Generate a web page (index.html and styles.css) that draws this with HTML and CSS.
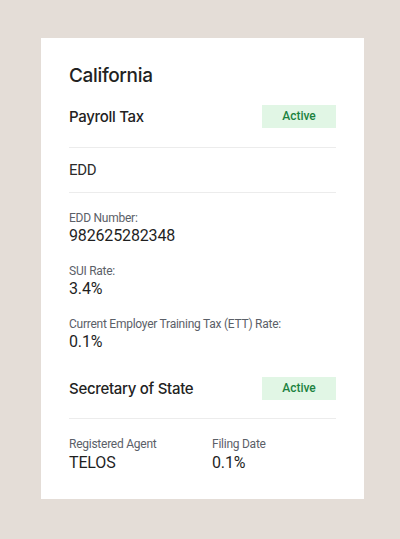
FILE: index.html
```html
<!DOCTYPE html>
<html>
<head>
<meta charset="utf-8">
<link rel="stylesheet" href="styles.css">
</head>
<body>
<div class="card">
  <h1 class="title">California</h1>
  <div class="section-head">
    <span class="section-name">Payroll Tax</span>
    <span class="badge">Active</span>
  </div>
  <div class="agency">EDD</div>
  <div class="fields">
    <div class="field">
      <div class="label">EDD Number:</div>
      <div class="value">982625282348</div>
    </div>
    <div class="field">
      <div class="label">SUI Rate:</div>
      <div class="value">3.4%</div>
    </div>
    <div class="field">
      <div class="label">Current Employer Training Tax (ETT) Rate:</div>
      <div class="value">0.1%</div>
    </div>
  </div>
  <div class="section-head second">
    <span class="section-name">Secretary of State</span>
    <span class="badge">Active</span>
  </div>
  <div class="grid">
    <div class="field">
      <div class="label">Registered Agent</div>
      <div class="value">TELOS</div>
    </div>
    <div class="field">
      <div class="label">Filing Date</div>
      <div class="value">0.1%</div>
    </div>
  </div>
</div>
</body>
</html>
```

FILE: styles.css
```css
html, body {
  margin: 0;
  padding: 0;
}
body {
  background: #e4ddd7;
  font-family: Roboto, Inter, "Noto Sans", sans-serif;
  color: #1f1f1f;
  width: 400px;
  height: 539px;
  overflow: hidden;
}
.card {
  margin: 38px 0 0 41px;
  width: 323px;
  height: 461px;
  box-sizing: border-box;
  background: #ffffff;
  padding: 26px 28px 0 28px;
}
.title {
  margin: 0;
  font-family: Inter, Roboto, sans-serif;
  font-size: 19px;
  line-height: 24px;
  font-weight: 500;
  letter-spacing: -0.35px;
  color: #222;
}
.section-head {
  margin-top: 17px;
  display: flex;
  align-items: center;
  justify-content: space-between;
  padding-bottom: 19px;
  border-bottom: 1px solid #ececec;
}
.section-head.second {
  margin-top: 25px;
  padding-bottom: 18px;
}
.section-name {
  font-family: Inter, Roboto, sans-serif;
  font-size: 15px;
  line-height: 20px;
  font-weight: 500;
  letter-spacing: -0.3px;
  color: #222;
}
.badge {
  width: 74px;
  height: 23px;
  background: #e1f6e5;
  color: #1b8240;
  font-size: 12px;
  font-weight: 500;
  line-height: 23px;
  text-align: center;
}
.agency {
  padding: 12px 0;
  font-size: 15px;
  line-height: 20px;
  letter-spacing: -0.3px;
  color: #2b2b2b;
  border-bottom: 1px solid #ececec;
}
.fields {
  padding-top: 17px;
  display: flex;
  flex-direction: column;
  gap: 17px;
}
.label {
  font-size: 12px;
  line-height: 16px;
  letter-spacing: -0.25px;
  color: #5b6068;
}
.value {
  font-size: 16px;
  line-height: 20px;
  letter-spacing: -0.15px;
  color: #1f1f1f;
}
.grid {
  padding-top: 16px;
  display: grid;
  grid-template-columns: 143px 1fr;
}
.grid .label {
  line-height: 18px;
}
```
